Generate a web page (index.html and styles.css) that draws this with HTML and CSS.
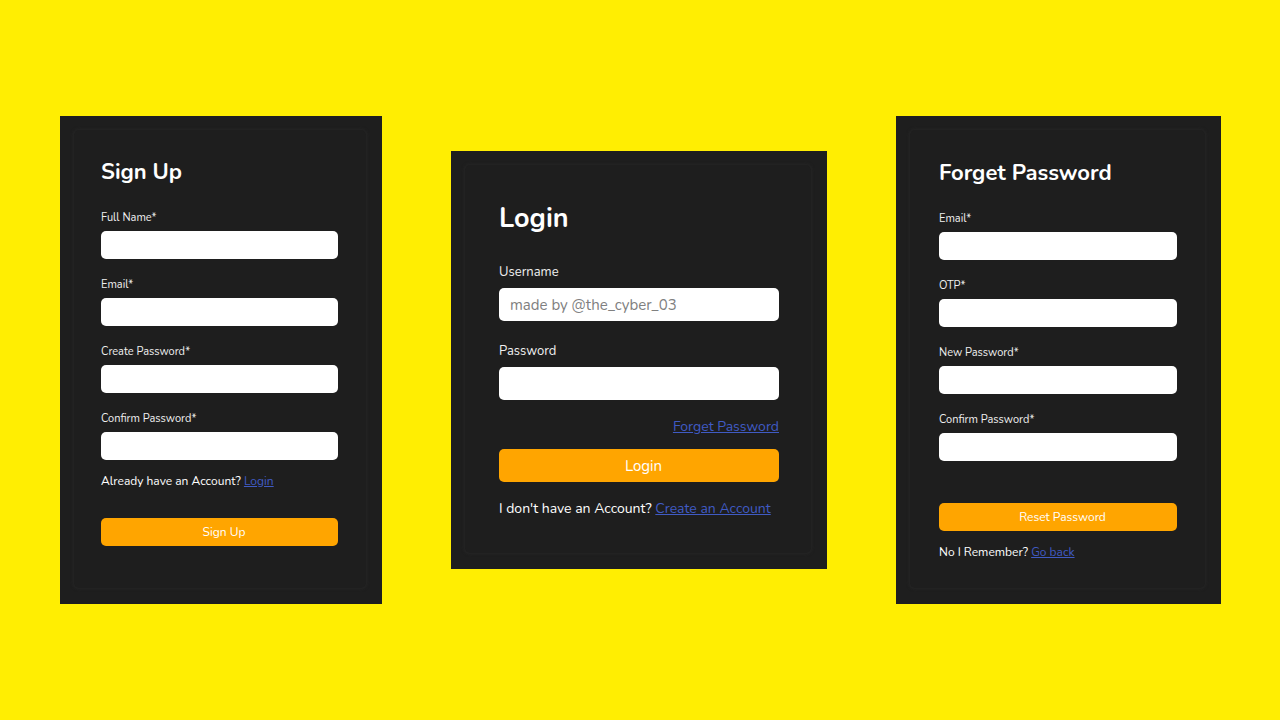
FILE: index.html
```html
<!DOCTYPE html>
<html lang="en">
<head>
<meta charset="utf-8">
<meta name="viewport" content="width=device-width, initial-scale=1">
<title>Account forms</title>
<link rel="stylesheet" href="styles.css">
</head>
<body>
<main class="page">
  <section class="card card-signup" id="signup">
    <form class="panel">
      <h1 class="title">Sign Up</h1>
      <div class="field"><label for="su-name">Full Name*</label><input id="su-name" type="text"></div>
      <div class="field"><label for="su-email">Email*</label><input id="su-email" type="email"></div>
      <div class="field"><label for="su-pass">Create Password*</label><input id="su-pass" type="password"></div>
      <div class="field"><label for="su-confirm">Confirm Password*</label><input id="su-confirm" type="password"></div>
      <p class="note">Already have an Account? <a href="#login">Login</a></p>
      <button class="submit" type="button">Sign Up</button>
    </form>
  </section>
  <section class="card card-login" id="login">
    <form class="panel">
      <h1 class="title">Login</h1>
      <div class="field"><label for="li-user">Username</label><input id="li-user" type="text" placeholder="made by @the_cyber_03"></div>
      <div class="field"><label for="li-pass">Password</label><input id="li-pass" type="password"></div>
      <p class="note note-right"><a href="#forget">Forget Password</a></p>
      <button class="submit" type="button">Login</button>
      <p class="note">I don't have an Account? <a href="#signup">Create an Account</a></p>
    </form>
  </section>
  <section class="card card-forget" id="forget">
    <form class="panel">
      <h1 class="title">Forget Password</h1>
      <div class="field"><label for="fp-email">Email*</label><input id="fp-email" type="email"></div>
      <div class="field"><label for="fp-otp">OTP*</label><input id="fp-otp" type="text"></div>
      <div class="field"><label for="fp-pass">New Password*</label><input id="fp-pass" type="password"></div>
      <div class="field"><label for="fp-confirm">Confirm Password*</label><input id="fp-confirm" type="password"></div>
      <button class="submit" type="button">Reset Password</button>
      <p class="note">No I Remember? <a href="#login">Go back</a></p>
    </form>
  </section>
</main>
</body>
</html>
```
FILE: styles.css
```css
* { box-sizing: border-box; }
body {
  margin: 0;
  background: #ffee02;
  color: #fff;
  font-family: Nunito, "Open Sans", "Noto Sans", sans-serif;
}
.page {
  min-height: 100vh;
  display: grid;
  grid-template-columns: 322fr 376fr 325fr;
  align-items: center;
  gap: 69px;
  padding: 24px 59px 24px 60px;
}
.card {
  --title: 22px;
  --label: 11px;
  --text: 12px;
  --control-text: 12px;
  --label-line: 16px;
  --line: 18px;
  --control: 28px;
  --label-gap: 5px;
  --field-gap: 18px;
  min-width: 0;
  background: #1e1e1e;
  padding: 14px 16px 16px 14px;
}
.card-login {
  --title: 27px;
  --label: 13px;
  --text: 14px;
  --control-text: 15px;
  --label-line: 18px;
  --line: 20px;
  --control: 33px;
  --label-gap: 7px;
  --field-gap: 21px;
}
.panel {
  display: flex;
  flex-direction: column;
  padding: 26px 28px 42px 27px;
  border-radius: 5px;
  box-shadow: 0 0 3px 1px #262626;
}
.card-login .panel { padding: 38px 32px 34px 34px; }
.card-forget .panel { padding: 27px 28px 27px 29px; }
.title {
  margin: 0 0 22px;
  font-size: var(--title);
  line-height: 32px;
  font-weight: 700;
}
.card-login .title { margin-bottom: 28px; }
.field {
  display: flex;
  flex-direction: column;
  gap: var(--label-gap);
}
.field + .field { margin-top: var(--field-gap); }
.field label {
  font-size: var(--label);
  line-height: var(--label-line);
  color: #f0f0f0;
}
.field input {
  width: 100%;
  height: var(--control);
  border: 0;
  border-radius: 5px;
  padding: 0 11px;
  background: #fff;
  color: #222;
  font: inherit;
  font-size: var(--control-text);
}
.field input::placeholder { color: #808080; opacity: 1; }
.note {
  margin: 12px 0 0;
  font-size: var(--text);
  line-height: var(--line);
}
.note a { color: #405bc4; }
.card-login .note { margin-top: 17px; }
.note-right { text-align: right; }
.submit {
  height: var(--control);
  margin: 28px 0 0;
  border: 0;
  border-radius: 5px;
  padding: 0 0 0 9px;
  background: #ffa500;
  color: #fff;
  font: inherit;
  font-size: var(--control-text);
}
.card-login .submit { margin-top: 12px; }
.card-forget .submit { margin-top: 42px; }
```
